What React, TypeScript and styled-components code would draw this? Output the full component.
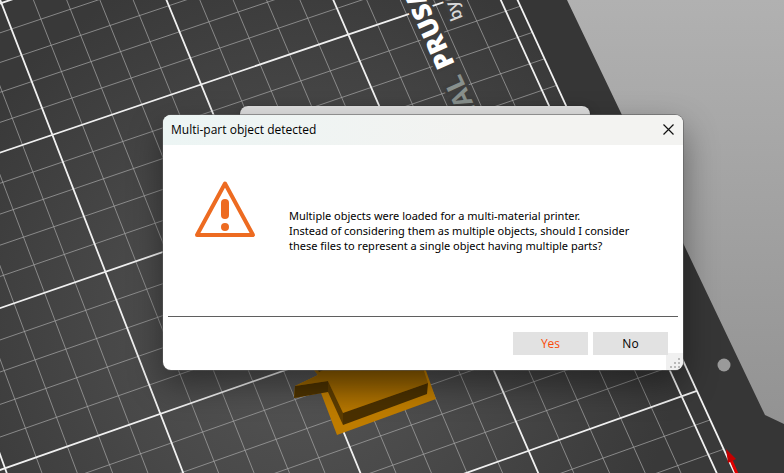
import React from "react";
import styled, { createGlobalStyle } from "styled-components";

const GlobalStyle = createGlobalStyle`
  *, *::before, *::after { box-sizing: border-box; }
  body {
    margin: 0;
    overflow: hidden;
    font-family: "Open Sans", "Noto Sans", sans-serif;
    font-size: 12px;
    color: #000;
  }
`;

type Point = [number, number];

/* Camera projection: bed coordinates (one unit per major square) to the viewport. */
const project = (u: number, v: number): Point => {
  const w = 0.005 * u - 0.018 * v + 1;
  return [(147 * u + 50.1 * v + 1.4) / w, (-49.1 * u + 129.5 * v + 3) / w];
};

const BED_LEFT = -2;
const BED_RIGHT = 3.1;
const BED_BOTTOM = 5;

const segment = (a: Point, b: Point) =>
  `M${a[0].toFixed(1)} ${a[1].toFixed(1)}L${b[0].toFixed(1)} ${b[1].toFixed(1)}`;

const column = (u: number) => segment(project(u, -2), project(u, BED_BOTTOM));
const row = (v: number) => segment(project(BED_LEFT, v), project(BED_RIGHT, v));

const range = (from: number, to: number) =>
  Array.from({ length: to - from + 1 }, (_, i) => from + i);

const minor = [
  ...range(-10, 15).filter((i) => i % 5 !== 0).map((i) => column(i / 5)),
  ...range(-5, 24).filter((i) => i % 5 !== 0).map((i) => row(i / 5)),
].join("");

const major = [
  ...range(-2, 3).map(column),
  ...range(0, 5).map(row),
].join("");

const Viewport = styled.main`
  position: relative;
  min-height: 100vh;
  overflow: hidden;
  background: linear-gradient(#b1b1b1, #8f8f8f);
`;

const Scene = styled.svg`
  position: absolute;
  inset: 0;
  width: 100%;
  height: 100%;
`;

const BackWindow = styled.div`
  position: absolute;
  left: 240px;
  top: 106px;
  width: 350px;
  height: 200px;
  border-radius: 8px;
  background: #dfdfdf;
  box-shadow: 0 0 1px rgba(0, 0, 0, 0.6), 0 4px 14px rgba(0, 0, 0, 0.2);
`;

const Dialog = styled.section`
  position: absolute;
  left: 163px;
  top: 115px;
  width: 520px;
  display: flex;
  flex-direction: column;
  border-radius: 8px;
  overflow: hidden;
  background: #fff;
  box-shadow: 0 0 0 1px rgba(90, 90, 90, 0.55), 0 14px 34px rgba(0, 0, 0, 0.42);
`;

const TitleBar = styled.header`
  display: flex;
  align-items: center;
  justify-content: space-between;
  height: 30px;
  padding-left: 8px;
  background: linear-gradient(90deg, #ecf5f4, #f3f3f1 60%);
`;

const Title = styled.h1`
  margin: 0;
  font-size: 12px;
  font-weight: 400;
  line-height: 16px;
`;

const CloseButton = styled.button`
  display: grid;
  place-items: center;
  width: 30px;
  height: 30px;
  padding: 0 0 2px;
  border: 0;
  background: none;
`;

const Body = styled.div`
  display: flex;
  gap: 32px;
  height: 171px;
  padding: 35px 16px 0 31px;
`;

const Message = styled.p`
  margin: 0;
  padding-top: 28px;
  font-family: "Noto Sans", sans-serif;
  font-size: 11px;
  line-height: 15px;
`;

const Footer = styled.footer`
  position: relative;
  display: flex;
  justify-content: flex-end;
  gap: 5px;
  height: 54px;
  margin: 0 5px;
  padding: 15px 10px 0;
  border-top: 1px solid #5f5f5f;
`;

const ActionButton = styled.button<{ $accent?: boolean }>`
  position: relative;
  z-index: 1;
  width: 75px;
  height: 23px;
  padding: 0;
  border: 0;
  background: #e2e2e2;
  color: ${(p) => (p.$accent ? "#fa4b0a" : "#000")};
  font: inherit;
  line-height: 23px;
`;

const ResizeGrip = styled.svg`
  position: absolute;
  right: -5px;
  bottom: 0;
  width: 17px;
  height: 17px;
  background: #f0f0f0;
`;

const AlertMark = styled.svg`
  flex: none;
  width: 63px;
  height: 60px;
`;

const WarningIcon = () => (
  <AlertMark viewBox="0 0 63 60" aria-hidden="true">
    <path d="M31 3.5 59 55H3Z" fill="none" stroke="#ed6b21" strokeWidth="4" strokeLinejoin="round" />
    <rect x="27" y="19" width="8" height="20" rx="4" fill="#ed6b21" />
    <circle cx="31" cy="47" r="4" fill="#ed6b21" />
  </AlertMark>
);

const PrintBed = () => (
  <Scene viewBox="0 0 784 473" preserveAspectRatio="xMinYMin slice" aria-hidden="true">
    <defs>
      <radialGradient id="sheen" gradientUnits="userSpaceOnUse" cx="300" cy="330" r="380">
        <stop offset="0" stopColor="#565656" />
        <stop offset="0.5" stopColor="#484848" />
        <stop offset="1" stopColor="#393939" />
      </radialGradient>
      <linearGradient id="face" x1="0" y1="0" x2="0" y2="1">
        <stop offset="0" stopColor="#865800" />
        <stop offset="1" stopColor="#b87800" />
      </linearGradient>
    </defs>
    <path d="M0 0H567L621 113L684 245L765 415L784 424V473H0Z" fill="#363636" />
    <path d="M0 0H515L726 450L737 473H0Z" fill="url(#sheen)" />
    <path d={minor} fill="none" stroke="#a8a8a8" strokeOpacity="0.7" strokeWidth="1" />
    <path d={major} fill="none" stroke="#f0f0f0" strokeWidth="1.8" />
    <path d={segment(project(BED_RIGHT, -1), project(BED_RIGHT, BED_BOTTOM))} stroke="#f4f4f4" strokeWidth="1.8" />
    <g fontFamily='"Open Sans", sans-serif' stroke="#3e3e3e" strokeWidth="6" paintOrder="stroke">
      <text transform="translate(455 64) rotate(-114)" fontSize="26" fontWeight="800" fill="#fff">PRUSA</text>
      <text transform="translate(460 73) rotate(-114)" fontSize="26" fontWeight="700" fill="#88908d" textAnchor="end">NAL</text>
      <text transform="translate(463 18) rotate(-112)" fontSize="17" fontWeight="600" fill="#d8d8d8">by</text>
    </g>
    <circle cx="724" cy="365" r="6.5" fill="#9a9a9a" />
    <path d="M310 365 318 375 295 386 294 398 321 393 337 435 436 399 424 365Z" fill="#be7c00" />
    <path d="M310 365 318 375 295 386 328 381 343 413 428 383 422 365Z" fill="url(#face)" />
    <path d="M295 386 328 381 328 392 294 398Z" fill="#4c3200" />
    <path d="M328 381 343 413 343 425 328 392Z" fill="#5c3c00" />
    <path d="M343 413 428 383 427 394 343 425Z" fill="#4a3000" />
    <path d="M318 370H323L319 372Z" fill="#4a3000" />
    <path d="M731 460 737 474" stroke="#e00000" strokeWidth="3" />
    <path d="M726 449 736 459 728 463Z" fill="#c40000" />
  </Scene>
);

export default function App() {
  return (
    <>
      <GlobalStyle />
      <Viewport>
        <PrintBed />
        <BackWindow />
        <Dialog role="alertdialog" aria-labelledby="dialog-title" aria-describedby="dialog-message">
          <TitleBar>
            <Title id="dialog-title">Multi-part object detected</Title>
            <CloseButton type="button" aria-label="Close">
              <svg width="11" height="11" viewBox="0 0 11 11" aria-hidden="true">
                <path d="M0.5 0.5 10.5 10.5M10.5 0.5 0.5 10.5" stroke="#111" strokeWidth="1.2" />
              </svg>
            </CloseButton>
          </TitleBar>
          <Body>
            <WarningIcon />
            <Message id="dialog-message">
              Multiple objects were loaded for a multi-material printer.
              <br />
              Instead of considering them as multiple objects, should I consider
              <br />
              these files to represent a single object having multiple parts?
            </Message>
          </Body>
          <Footer>
            <ActionButton type="button" $accent>Yes</ActionButton>
            <ActionButton type="button">No</ActionButton>
            <ResizeGrip viewBox="0 0 17 17" aria-hidden="true">
              <path
                d="M12 7h2v2h-2zM8 11h2v2h-2zM12 11h2v2h-2zM4 15h2v2h-2zM8 15h2v2h-2zM12 15h2v2h-2z"
                transform="translate(0 -2)"
                fill="#b9b9b9"
              />
            </ResizeGrip>
          </Footer>
        </Dialog>
      </Viewport>
    </>
  );
}
